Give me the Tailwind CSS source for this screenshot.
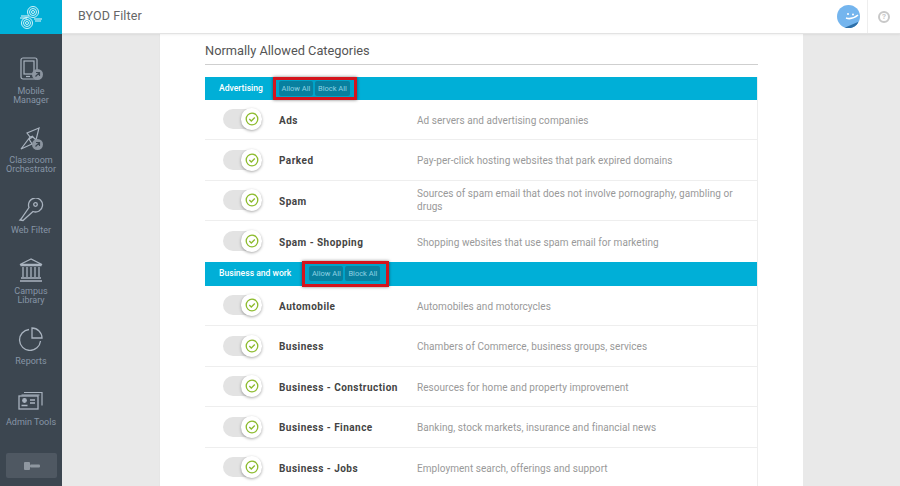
<!DOCTYPE html>
<html><head><meta charset="utf-8"><script src="https://cdn.jsdelivr.net/npm/@tailwindcss/browser@4"></script></head>
<body class="w-[900px] h-[486px] overflow-hidden bg-[#e9e9e9] font-['Roboto',sans-serif]">
<div class="flex h-[486px]">
<aside class="w-[62px] shrink-0 bg-[#3c4650] flex flex-col text-[#8795a6] text-[9px] leading-[9px] text-center">
  <div class="h-[34px] bg-[#00afd7] flex items-center justify-center">
    <svg width="26" height="26" viewBox="0 0 26 26" fill="none" stroke="#e8f8fc" stroke-width="0.900"><circle cx="15" cy="8" r="5.500"/><circle cx="15" cy="8" r="3.500"/><circle cx="15" cy="8" r="1.500"/><circle cx="9" cy="19" r="5.500"/><circle cx="9" cy="19" r="3.500"/><circle cx="9" cy="19" r="1.500"/><path d="M3 12h8M2 14h7M16 15h8M17 17h6" stroke-width="1.100"/></svg>
  </div>
  <div class="h-[23px]"></div>
  <div class="h-[70px] flex flex-col items-center">
    <svg class="h-[24px] w-[26px]" viewBox="0 0 26 24" fill="none" stroke="#a9b3bf" stroke-width="1.200"><rect x="3" y="1" width="16" height="21" rx="2"/><rect x="6" y="4" width="10" height="13"/><path d="M8 19.500h4"/><circle cx="19.500" cy="17.500" r="5.500" fill="#8c95a0" stroke="none"/><path d="M17.500 19.500l4-4M18 15.500h3.500v3.500" stroke="#3c4650"/></svg>
    <div class="mt-[6px]">Mobile<br>Manager</div>
  </div>
  <div class="h-[71px] flex flex-col items-center">
    <svg class="h-[24px] w-[26px]" viewBox="0 0 26 24" fill="none" stroke="#a9b3bf" stroke-width="1.200"><path d="M21 1L9 6l3 4-9 12 11-5-3-5 4-2 3 3zM12 10l3-1"/><circle cx="19.500" cy="17.500" r="5.500" fill="#8c95a0" stroke="none"/><path d="M17.500 19.500l4-4M18 15.500h3.500v3.500" stroke="#3c4650"/></svg>
    <div class="mt-[5px]">Classroom<br>Orchestrator</div>
  </div>
  <div class="h-[60px] flex flex-col items-center">
    <svg class="h-[24px] w-[26px]" viewBox="0 0 26 24" fill="none" stroke="#a9b3bf" stroke-width="1.300"><path d="M3 21l-1 1 3 .5 10-9a7 7 0 1 0-4-4z"/><circle cx="17.500" cy="6.500" r="1.800"/></svg>
    <div class="mt-[4px]">Web Filter</div>
  </div>
  <div class="h-[69px] flex flex-col items-center">
    <svg class="h-[24px] w-[26px]" viewBox="0 0 26 24" fill="none" stroke="#a9b3bf" stroke-width="1.300"><path d="M13 1L2 6.500h22zM2.500 7.500h21M5 9v10M9 9v10M13 9v10M17 9v10M21 9v10M3 20h20M2 23h22"/></svg>
    <div class="mt-[5px]">Campus<br>Library</div>
  </div>
  <div class="h-[64px] flex flex-col items-center">
    <svg class="h-[24px] w-[26px]" viewBox="0 0 26 24" fill="none" stroke="#a9b3bf" stroke-width="1.300"><path d="M11 2.500a10.500 10.500 0 1 0 11.500 11.500"/><path d="M14 1v10h10A10 10 0 0 0 14 1z"/></svg>
    <div class="mt-[6px]">Reports</div>
  </div>
  <div class="h-[64px] flex flex-col items-center">
    <svg class="h-[20px] w-[26px]" viewBox="0 0 26 20" fill="none" stroke="#a9b3bf" stroke-width="1.200"><path d="M6 1.500h18v13M3.500 4h18"/><rect x="1" y="5" width="19" height="13" stroke-width="1.300"/><circle cx="6.500" cy="9.500" r="1.800" fill="#a9b3bf"/><path d="M3.500 14.500h6M12 9h5M12 12h5" stroke-width="1.500"/></svg>
    <div class="mt-[7px]">Admin Tools</div>
  </div>
  <div class="mx-[6px] mt-[-2px] h-[25px] w-[51px] rounded-[2px] bg-[#4f5862] flex items-center justify-center">
    <svg width="16" height="8" viewBox="0 0 16 8" fill="#8f97a0"><rect x="0" y="0" width="6" height="8" rx="1"/><rect x="6" y="2.500" width="10" height="3" rx="1"/></svg>
  </div>
</aside>
<div class="flex-1 flex flex-col min-w-0">
  <header class="h-[34px] shrink-0 bg-white border-b border-[#e3e3e3] shadow-[0_1px_2px_rgba(0,0,0,0.06)] flex items-center relative">
    <div class="ml-[16px] text-[12.500px] text-[#666] tracking-[0.1px]">BYOD Filter</div>
    <div class="ml-auto w-[23px] h-[23px] rounded-full bg-[#74b5ee] mr-[7px] overflow-hidden">
      <svg width="23" height="23" viewBox="0 0 23 23"><path d="M7 23L21 17l2 6z" fill="#2d6fa8"/><circle cx="11" cy="9" r="1" fill="#fff"/><circle cx="16" cy="9.500" r="1" fill="#fff"/><path d="M9 13q6 2 12-3" stroke="#fff" stroke-width="1.600" fill="none"/></svg>
    </div>
    <div class="w-[33px] h-[33px] border-l border-[#eee] flex items-center justify-center">
      <div class="w-[12px] h-[12px] rounded-full border-2 border-[#c8c8c8] text-[#c8c8c8] text-[8px] leading-[8px] font-bold text-center">?</div>
    </div>
  </header>
  <main class="flex-1 overflow-hidden">
    <div class="ml-[97px] w-[644px] h-full bg-white pl-[45px] pr-[45px] border-l border-[#e6e6e6]">
      <h2 class="h-[31px] pt-[8px] border-b border-[#cfcfcf] text-[12.800px] leading-[18px] text-[#555]">Normally Allowed Categories</h2>
      <div class="h-[12px]"></div>
      <div class="w-[553px] border-r border-[#eee]">
        <div class="h-[22.500px] bg-[#00afd7] flex items-center text-white pl-[14px] text-[8.600px] font-medium">
          <span>Advertising</span>
          <div class="ml-[10px] border-[3px] border-[#d4141c] shadow-[0_0_3px_rgba(0,0,0,0.5)] flex gap-[2px] h-[23px] shrink-0 items-center pl-[3px] pr-[4px] bg-[#00a3c9]">
            <span class="h-[15px] w-[34px] bg-[#08809f] rounded-[2px] text-[#8ed2e3] text-[7.500px] font-normal leading-[15px] text-center">Allow All</span>
            <span class="h-[15px] w-[35px] bg-[#08809f] rounded-[2px] text-[#8ed2e3] text-[7.500px] font-normal leading-[15px] text-center">Block All</span>
          </div>
        </div>
        <div class="flex items-center h-[40.500px] border-b border-[#eee]">
          <div class="ml-[18px] w-[39px] h-[20px] rounded-full bg-[#e3e3e3] relative"><div class="absolute right-0 top-[-1px] w-[21px] h-[22px] rounded-full bg-white shadow-[0_1px_3px_rgba(0,0,0,0.35)] flex items-center justify-center"><svg width="14" height="14" viewBox="0 0 14 14" fill="none" stroke="#8cbb2c"><circle cx="7" cy="7" r="5.800" stroke-width="1.300"/><path d="M4.300 7l2 2 3.500-3.500" stroke-width="1.300"/></svg></div></div>
          <div class="ml-[17px] w-[138px] pt-[2px] shrink-0 text-[10px] font-bold tracking-[0.47px] text-[#444]">Ads</div>
          <div class="w-[340px] pt-[2px] text-[10px] leading-[13px] text-[#999] tracking-[0.05px]">Ad servers and advertising companies</div>
        </div>
        <div class="flex items-center h-[40.500px] border-b border-[#eee]">
          <div class="ml-[18px] w-[39px] h-[20px] rounded-full bg-[#e3e3e3] relative"><div class="absolute right-0 top-[-1px] w-[21px] h-[22px] rounded-full bg-white shadow-[0_1px_3px_rgba(0,0,0,0.35)] flex items-center justify-center"><svg width="14" height="14" viewBox="0 0 14 14" fill="none" stroke="#8cbb2c"><circle cx="7" cy="7" r="5.800" stroke-width="1.300"/><path d="M4.300 7l2 2 3.500-3.500" stroke-width="1.300"/></svg></div></div>
          <div class="ml-[17px] w-[138px] pt-[2px] shrink-0 text-[10px] font-bold tracking-[0.47px] text-[#444]">Parked</div>
          <div class="w-[340px] pt-[2px] text-[10px] leading-[13px] text-[#999] tracking-[0.05px]">Pay-per-click hosting websites that park expired domains</div>
        </div>
        <div class="flex items-center h-[40.500px] border-b border-[#eee]">
          <div class="ml-[18px] w-[39px] h-[20px] rounded-full bg-[#e3e3e3] relative"><div class="absolute right-0 top-[-1px] w-[21px] h-[22px] rounded-full bg-white shadow-[0_1px_3px_rgba(0,0,0,0.35)] flex items-center justify-center"><svg width="14" height="14" viewBox="0 0 14 14" fill="none" stroke="#8cbb2c"><circle cx="7" cy="7" r="5.800" stroke-width="1.300"/><path d="M4.300 7l2 2 3.500-3.500" stroke-width="1.300"/></svg></div></div>
          <div class="ml-[17px] w-[138px] pt-[2px] shrink-0 text-[10px] font-bold tracking-[0.47px] text-[#444]">Spam</div>
          <div class="w-[330px] text-[10px] leading-[13px] text-[#999] tracking-[0.05px]">Sources of spam email that does not involve pornography, gambling or drugs</div>
        </div>
        <div class="flex items-center h-[40.500px]">
          <div class="ml-[18px] w-[39px] h-[20px] rounded-full bg-[#e3e3e3] relative"><div class="absolute right-0 top-[-1px] w-[21px] h-[22px] rounded-full bg-white shadow-[0_1px_3px_rgba(0,0,0,0.35)] flex items-center justify-center"><svg width="14" height="14" viewBox="0 0 14 14" fill="none" stroke="#8cbb2c"><circle cx="7" cy="7" r="5.800" stroke-width="1.300"/><path d="M4.300 7l2 2 3.500-3.500" stroke-width="1.300"/></svg></div></div>
          <div class="ml-[17px] w-[138px] pt-[2px] shrink-0 text-[10px] font-bold tracking-[0.47px] text-[#444]">Spam - Shopping</div>
          <div class="w-[340px] pt-[2px] text-[10px] leading-[13px] text-[#999] tracking-[0.05px]">Shopping websites that use spam email for marketing</div>
        </div>
        <div class="h-[24px] bg-[#00afd7] flex items-center text-white pl-[14px] text-[8.600px] font-medium">
          <span>Business and work</span>
          <div class="ml-[11px] border-[3px] border-[#d4141c] shadow-[0_0_3px_rgba(0,0,0,0.5)] flex gap-[2px] h-[26px] shrink-0 items-center pl-[4px] pr-[6px] bg-[#00a3c9]">
            <span class="h-[15px] w-[34px] bg-[#08809f] rounded-[2px] text-[#8ed2e3] text-[7.500px] font-normal leading-[15px] text-center">Allow All</span>
            <span class="h-[15px] w-[35px] bg-[#08809f] rounded-[2px] text-[#8ed2e3] text-[7.500px] font-normal leading-[15px] text-center">Block All</span>
          </div>
        </div>
        <div class="flex items-center h-[40.500px] border-b border-[#eee]">
          <div class="ml-[18px] w-[39px] h-[20px] rounded-full bg-[#e3e3e3] relative"><div class="absolute right-0 top-[-1px] w-[21px] h-[22px] rounded-full bg-white shadow-[0_1px_3px_rgba(0,0,0,0.35)] flex items-center justify-center"><svg width="14" height="14" viewBox="0 0 14 14" fill="none" stroke="#8cbb2c"><circle cx="7" cy="7" r="5.800" stroke-width="1.300"/><path d="M4.300 7l2 2 3.500-3.500" stroke-width="1.300"/></svg></div></div>
          <div class="ml-[17px] w-[138px] pt-[2px] shrink-0 text-[10px] font-bold tracking-[0.47px] text-[#444]">Automobile</div>
          <div class="w-[340px] pt-[2px] text-[10px] leading-[13px] text-[#999] tracking-[0.05px]">Automobiles and motorcycles</div>
        </div>
        <div class="flex items-center h-[40.500px] border-b border-[#eee]">
          <div class="ml-[18px] w-[39px] h-[20px] rounded-full bg-[#e3e3e3] relative"><div class="absolute right-0 top-[-1px] w-[21px] h-[22px] rounded-full bg-white shadow-[0_1px_3px_rgba(0,0,0,0.35)] flex items-center justify-center"><svg width="14" height="14" viewBox="0 0 14 14" fill="none" stroke="#8cbb2c"><circle cx="7" cy="7" r="5.800" stroke-width="1.300"/><path d="M4.300 7l2 2 3.500-3.500" stroke-width="1.300"/></svg></div></div>
          <div class="ml-[17px] w-[138px] pt-[2px] shrink-0 text-[10px] font-bold tracking-[0.47px] text-[#444]">Business</div>
          <div class="w-[340px] pt-[2px] text-[10px] leading-[13px] text-[#999] tracking-[0.05px]">Chambers of Commerce, business groups, services</div>
        </div>
        <div class="flex items-center h-[40.500px] border-b border-[#eee]">
          <div class="ml-[18px] w-[39px] h-[20px] rounded-full bg-[#e3e3e3] relative"><div class="absolute right-0 top-[-1px] w-[21px] h-[22px] rounded-full bg-white shadow-[0_1px_3px_rgba(0,0,0,0.35)] flex items-center justify-center"><svg width="14" height="14" viewBox="0 0 14 14" fill="none" stroke="#8cbb2c"><circle cx="7" cy="7" r="5.800" stroke-width="1.300"/><path d="M4.300 7l2 2 3.500-3.500" stroke-width="1.300"/></svg></div></div>
          <div class="ml-[17px] w-[138px] pt-[2px] shrink-0 text-[10px] font-bold tracking-[0.47px] text-[#444]">Business - Construction</div>
          <div class="w-[340px] pt-[2px] text-[10px] leading-[13px] text-[#999] tracking-[0.05px]">Resources for home and property improvement</div>
        </div>
        <div class="flex items-center h-[40.500px] border-b border-[#eee]">
          <div class="ml-[18px] w-[39px] h-[20px] rounded-full bg-[#e3e3e3] relative"><div class="absolute right-0 top-[-1px] w-[21px] h-[22px] rounded-full bg-white shadow-[0_1px_3px_rgba(0,0,0,0.35)] flex items-center justify-center"><svg width="14" height="14" viewBox="0 0 14 14" fill="none" stroke="#8cbb2c"><circle cx="7" cy="7" r="5.800" stroke-width="1.300"/><path d="M4.300 7l2 2 3.500-3.500" stroke-width="1.300"/></svg></div></div>
          <div class="ml-[17px] w-[138px] pt-[2px] shrink-0 text-[10px] font-bold tracking-[0.47px] text-[#444]">Business - Finance</div>
          <div class="w-[340px] pt-[2px] text-[10px] leading-[13px] text-[#999] tracking-[0.05px]">Banking, stock markets, insurance and financial news</div>
        </div>
        <div class="flex items-center h-[40.500px] border-b border-[#eee]">
          <div class="ml-[18px] w-[39px] h-[20px] rounded-full bg-[#e3e3e3] relative"><div class="absolute right-0 top-[-1px] w-[21px] h-[22px] rounded-full bg-white shadow-[0_1px_3px_rgba(0,0,0,0.35)] flex items-center justify-center"><svg width="14" height="14" viewBox="0 0 14 14" fill="none" stroke="#8cbb2c"><circle cx="7" cy="7" r="5.800" stroke-width="1.300"/><path d="M4.300 7l2 2 3.500-3.500" stroke-width="1.300"/></svg></div></div>
          <div class="ml-[17px] w-[138px] pt-[2px] shrink-0 text-[10px] font-bold tracking-[0.47px] text-[#444]">Business - Jobs</div>
          <div class="w-[340px] pt-[2px] text-[10px] leading-[13px] text-[#999] tracking-[0.05px]">Employment search, offerings and support</div>
        </div>
      </div>
    </div>
  </main>
</div>
</div>
</body></html>
